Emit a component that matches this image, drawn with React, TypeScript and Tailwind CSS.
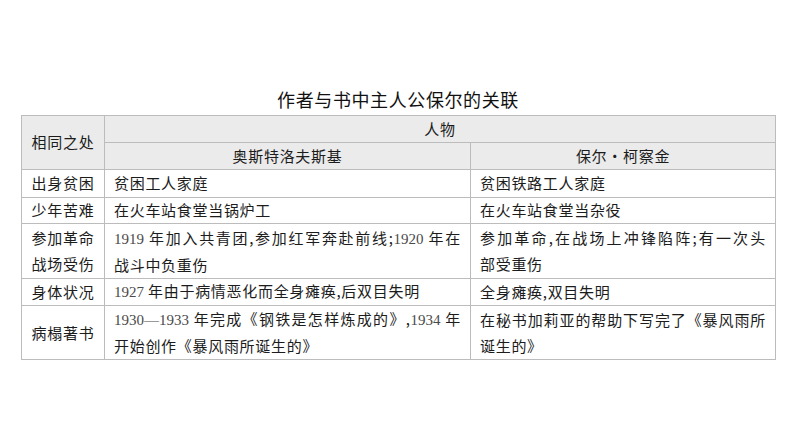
import React from 'react'

const cjk = '"Noto Sans CJK SC", "Noto Sans", sans-serif'

// numbers in the source are set in a serif face
function N({ children }: { children: React.ReactNode }) {
  return <span className="font-['Liberation_Serif',serif] tracking-normal text-[15px] text-[#4a4a4a]">{children}</span>
}

// a line that fills the cell width (justified like the print)
function J({ children }: { children: React.ReactNode }) {
  return <div className="text-justify [text-align-last:justify]">{children}</div>
}

const cell = 'border border-[#bcbcbc] text-[15px] tracking-[0.7px] text-[#1c1c1c]'

export default function App() {
  return (
    <div className="w-[794px] h-[447px] bg-white pt-[87px]" style={{ fontFamily: cjk }}>
      <div className="text-center text-[18px] leading-[24px] tracking-[0.6px] text-[#111] mb-[4px] pl-[2px]">
        作者与书中主人公保尔的关联
      </div>
      <table className="ml-[21px] w-[754px] border-collapse table-fixed border border-[#b0b0b0]">
        <colgroup>
          <col className="w-[83px]" />
          <col className="w-[366px]" />
          <col className="w-[305px]" />
        </colgroup>
        <tbody>
          <tr className="h-[27px] bg-[#ebebeb]">
            <td rowSpan={2} className={`${cell} text-center align-middle`}>相同之处</td>
            <td colSpan={2} className={`${cell} text-center`}>人物</td>
          </tr>
          <tr className="h-[27px] bg-[#ebebeb]">
            <td className={`${cell} text-center`}>奥斯特洛夫斯基</td>
            <td className={`${cell} text-center`}>保尔·柯察金</td>
          </tr>
          <tr className="h-[28px]">
            <td className={`${cell} text-center`}>出身贫困</td>
            <td className={`${cell} px-[9px]`}>贫困工人家庭</td>
            <td className={`${cell} px-[9px]`}>贫困铁路工人家庭</td>
          </tr>
          <tr className="h-[26px]">
            <td className={`${cell} text-center`}>少年苦难</td>
            <td className={`${cell} px-[9px]`}>在火车站食堂当锅炉工</td>
            <td className={`${cell} px-[9px]`}>在火车站食堂当杂役</td>
          </tr>
          <tr className="h-[55px] leading-[26px]">
            <td className={`${cell} text-center`}>
              <div>参加革命</div>
              <div>战场受伤</div>
            </td>
            <td className={`${cell} px-[9px]`}>
              <J>
                <N>1919</N> 年加入共青团,参加红军奔赴前线;<N>1920</N> 年在
              </J>
              <div>战斗中负重伤</div>
            </td>
            <td className={`${cell} px-[9px]`}>
              <J>参加革命,在战场上冲锋陷阵;有一次头</J>
              <div>部受重伤</div>
            </td>
          </tr>
          <tr className="h-[27px]">
            <td className={`${cell} text-center`}>身体状况</td>
            <td className={`${cell} px-[9px]`}>
              <N>1927</N> 年由于病情恶化而全身瘫痪,后双目失明
            </td>
            <td className={`${cell} px-[9px]`}>全身瘫痪,双目失明</td>
          </tr>
          <tr className="h-[54px] leading-[26px]">
            <td className={`${cell} text-center`}>病榻著书</td>
            <td className={`${cell} px-[9px]`}>
              <J>
                <N>1930—1933</N> 年完成《钢铁是怎样炼成的》,<N>1934</N> 年
              </J>
              <div>开始创作《暴风雨所诞生的》</div>
            </td>
            <td className={`${cell} px-[9px]`}>
              <J>在秘书加莉亚的帮助下写完了《暴风雨所</J>
              <div>诞生的》</div>
            </td>
          </tr>
        </tbody>
      </table>
    </div>
  )
}
